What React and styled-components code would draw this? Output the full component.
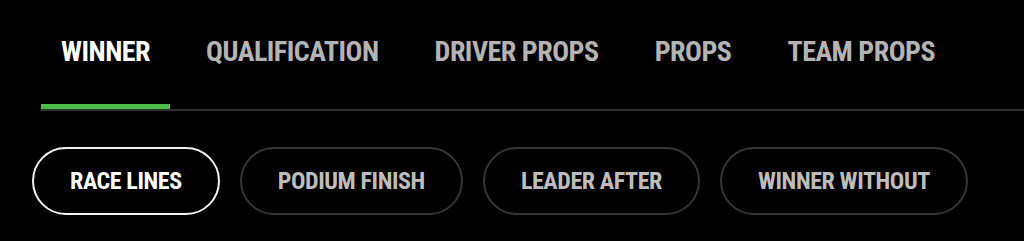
import React, { useState } from 'react';
import styled, { createGlobalStyle } from 'styled-components';

const GlobalStyle = createGlobalStyle`
  html, body {
    margin: 0;
    padding: 0;
    background: #000;
  }
  body {
    font-family: "Roboto Condensed", "Open Sans", "DejaVu Sans", sans-serif;
    font-stretch: condensed;
    -webkit-font-smoothing: antialiased;
  }
`;

const Page = styled.div`
  width: 1024px;
  height: 241px;
  background: #000;
  overflow: hidden;
`;

const TabBar = styled.nav`
  display: flex;
  gap: 16px;
  margin-left: 41px;
  border-bottom: 2px solid #2f2f2f;
`;

const Tab = styled.button`
  background: none;
  border: none;
  border-bottom: 5px solid ${p => (p.$active ? '#4cbb47' : 'transparent')};
  padding: 38px 20px 38px;
  margin: 0;
  font-family: inherit;
  font-weight: 700;
  font-size: 28px;
  letter-spacing: -0.5px;
  line-height: 28px;
  color: ${p => (p.$active ? '#ffffff' : '#b4b4b4')};
  cursor: pointer;
  white-space: nowrap;
`;

const PillRow = styled.div`
  display: flex;
  gap: 20px;
  margin: 36px 0 0 32px;
`;

const Pill = styled.button`
  height: 68px;
  box-sizing: border-box;
  padding: 0 36px;
  border-radius: 34px;
  border: 2px solid ${p => (p.$active ? '#f2f2f2' : '#363636')};
  background: #000;
  font-family: inherit;
  font-weight: 700;
  font-size: 24px;
  letter-spacing: -0.4px;
  color: ${p => (p.$active ? '#ffffff' : '#bdbdbd')};
  cursor: pointer;
  white-space: nowrap;
`;

const tabs = ['WINNER', 'QUALIFICATION', 'DRIVER PROPS', 'PROPS', 'TEAM PROPS'];
const lines = ['RACE LINES', 'PODIUM FINISH', 'LEADER AFTER', 'WINNER WITHOUT'];

export default function App() {
  const [tab, setTab] = useState(0);
  const [line, setLine] = useState(0);

  return (
    <Page>
      <GlobalStyle />
      <TabBar>
        {tabs.map((t, i) => (
          <Tab key={t} $active={i === tab} onClick={() => setTab(i)}>
            {t}
          </Tab>
        ))}
      </TabBar>
      <PillRow>
        {lines.map((l, i) => (
          <Pill key={l} $active={i === line} onClick={() => setLine(i)}>
            {l}
          </Pill>
        ))}
      </PillRow>
    </Page>
  );
}
